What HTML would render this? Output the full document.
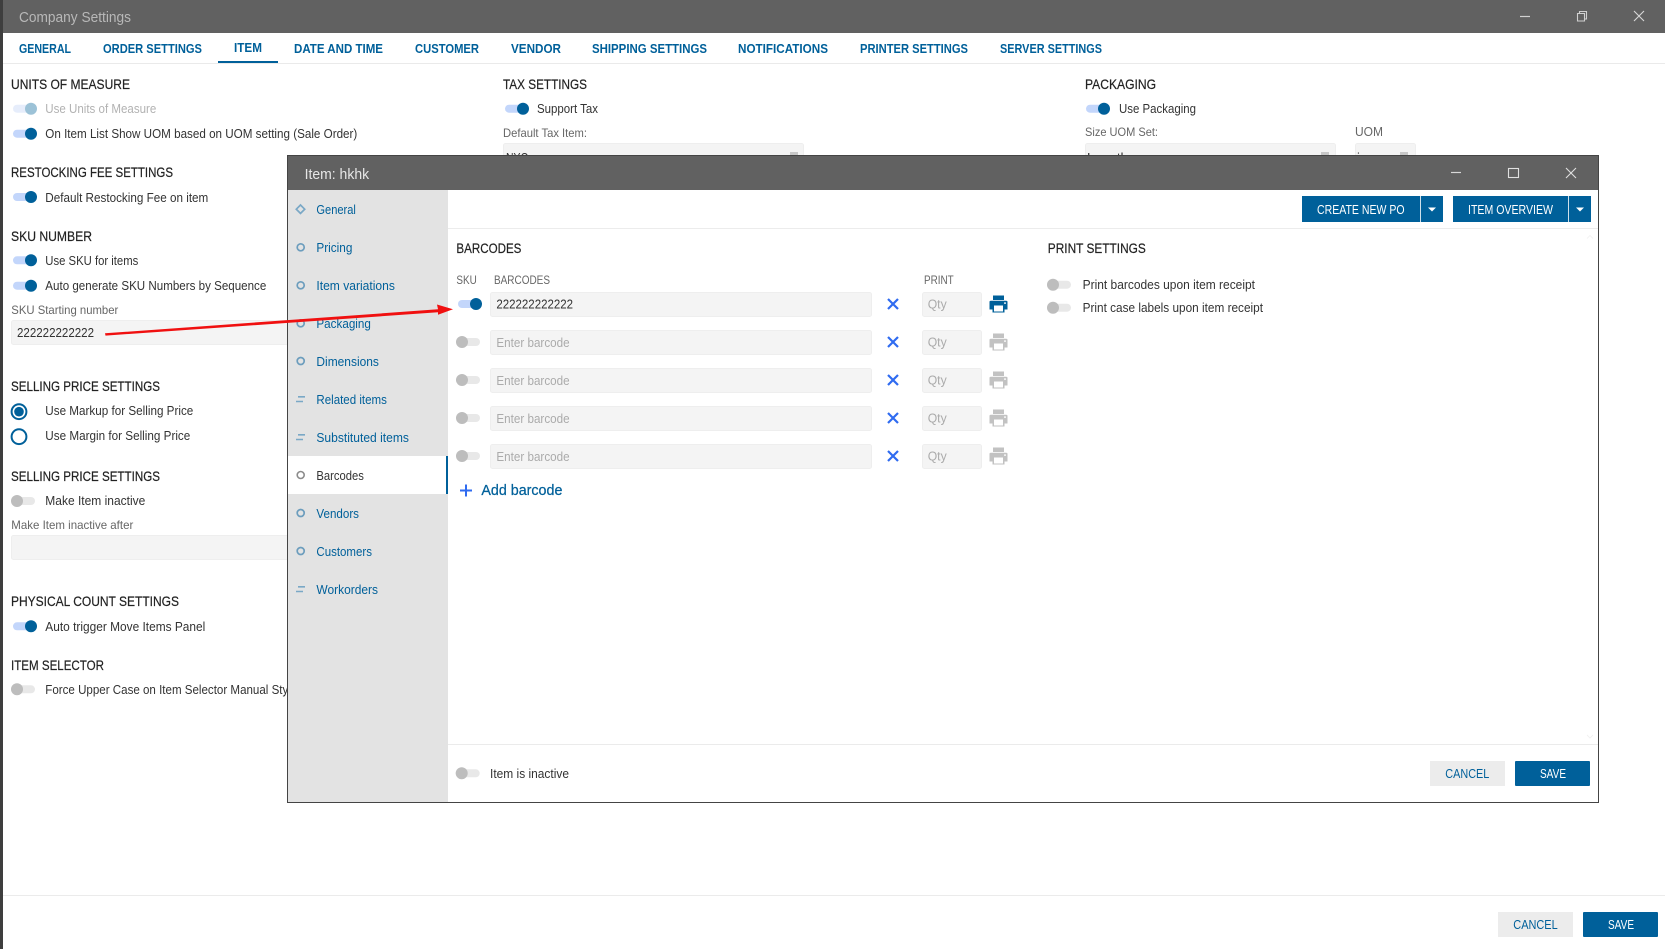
<!DOCTYPE html>
<html lang="en">
<head>
<meta charset="utf-8">
<title>Company Settings</title>
<style>
html,body{margin:0;padding:0;background:#fff;width:1665px;height:949px;overflow:hidden}
svg{display:block}
text{font-family:"Liberation Sans",Arial,sans-serif;font-size:13px;fill:#333;white-space:pre}
.tab{font-weight:bold;fill:#00609a}
.h{font-size:14px;fill:#222;stroke:#222;stroke-width:.2px}
.l{font-size:12px;fill:#666}
.nav{fill:#00609a}
.ph{fill:#ababab}
.w{fill:#fff}
.b{fill:#00609a}
.inp{fill:#f4f4f4;stroke:#eeeeee;stroke-width:1}
</style>
</head>
<body>
<svg width="1665" height="949" viewBox="0 0 1665 949" xmlns="http://www.w3.org/2000/svg">
<defs>
<g id="on"><rect x="-18" y="-4" width="22" height="8" rx="4" fill="#c3d6fb"/><circle r="6" fill="#00609a"/></g>
<g id="dis"><rect x="-18" y="-4" width="22" height="8" rx="4" fill="#e6edfb"/><circle r="6" fill="#9cc2d7"/></g>
<g id="off"><rect x="-6" y="-4" width="24" height="8" rx="4" fill="#e8e8e8"/><circle r="6" fill="#bdbdbd"/></g>
<g id="printer">
  <rect x="-5.500" y="-8.500" width="11" height="4.500" fill="currentColor"/>
  <path d="M-9 -2 Q-9 -3.200 -7.600 -3.200 H7.600 Q9 -3.200 9 -2 V5.500 H6 V8.500 H-6 V5.500 H-9 Z" fill="currentColor"/>
  <rect x="-4.500" y="1.500" width="9" height="6" fill="#fff"/>
  <rect x="5.600" y="-1.600" width="1.800" height="1.400" fill="#fff"/>
</g>
<g id="x"><path d="M-5 -5 L5 5 M5 -5 L-5 5" stroke="#2f6bf0" stroke-width="2.200" fill="none"/></g>
<g id="ring"><circle r="3.500" fill="none" stroke="#6c9dbd" stroke-width="1.700"/></g>
<g id="lines"><path d="M-2.700 -2.200 H4.300 M-4.700 2.500 H2.300" stroke="#7aa8c6" stroke-width="1.600" fill="none"/></g>
</defs>

<!-- Background window -->
<rect width="1665" height="949" fill="#fff"/>
<rect x="0" y="0" width="3" height="949" fill="#3e3e3e"/>
<rect x="3" y="0" width="1662" height="33" fill="#616161"/>
<text x="19" y="22" style="font-size:15px;fill:#b8b8b8" textLength="112" lengthAdjust="spacingAndGlyphs">Company Settings</text>
<path d="M1520 16.500H1530" stroke="#d0d0d0" stroke-width="1.200"/>
<path d="M1577.500 13.500h7v7.500h-7z M1579.500 13.500v-2h7v7.500h-2" fill="none" stroke="#d0d0d0" stroke-width="1.100"/>
<path d="M1634 11L1644 21M1644 11L1634 21" stroke="#d8d8d8" stroke-width="1.100"/>

<rect x="3" y="63" width="1662" height="1" fill="#eaeaea"/>
<text class="tab" x="19" y="53" textLength="52" lengthAdjust="spacingAndGlyphs">GENERAL</text>
<text class="tab" x="103" y="53" textLength="99" lengthAdjust="spacingAndGlyphs">ORDER SETTINGS</text>
<text class="tab" x="234" y="52" textLength="28" lengthAdjust="spacingAndGlyphs">ITEM</text>
<rect x="218" y="61" width="60" height="2" fill="#00609a"/>
<text class="tab" x="294" y="53" textLength="89" lengthAdjust="spacingAndGlyphs">DATE AND TIME</text>
<text class="tab" x="415" y="53" textLength="64" lengthAdjust="spacingAndGlyphs">CUSTOMER</text>
<text class="tab" x="511" y="53" textLength="50" lengthAdjust="spacingAndGlyphs">VENDOR</text>
<text class="tab" x="592" y="53" textLength="115" lengthAdjust="spacingAndGlyphs">SHIPPING SETTINGS</text>
<text class="tab" x="738" y="53" textLength="90" lengthAdjust="spacingAndGlyphs">NOTIFICATIONS</text>
<text class="tab" x="860" y="53" textLength="108" lengthAdjust="spacingAndGlyphs">PRINTER SETTINGS</text>
<text class="tab" x="1000" y="53" textLength="102" lengthAdjust="spacingAndGlyphs">SERVER SETTINGS</text>

<!-- Left column -->
<text class="h" x="11" y="89" textLength="119" lengthAdjust="spacingAndGlyphs">UNITS OF MEASURE</text>
<use href="#dis" x="31" y="108.700"/>
<text x="45.300" y="113" style="fill:#b2b2b2" textLength="111" lengthAdjust="spacingAndGlyphs">Use Units of Measure</text>
<use href="#on" x="31" y="133.700"/>
<text x="45.300" y="138" textLength="312" lengthAdjust="spacingAndGlyphs">On Item List Show UOM based on UOM setting (Sale Order)</text>

<text class="h" x="11" y="177" textLength="162" lengthAdjust="spacingAndGlyphs">RESTOCKING FEE SETTINGS</text>
<use href="#on" x="31" y="197"/>
<text x="45.300" y="202" textLength="163" lengthAdjust="spacingAndGlyphs">Default Restocking Fee on item</text>

<text class="h" x="11" y="241" textLength="81" lengthAdjust="spacingAndGlyphs">SKU NUMBER</text>
<use href="#on" x="31" y="260.300"/>
<text x="45.300" y="265" textLength="93" lengthAdjust="spacingAndGlyphs">Use SKU for items</text>
<use href="#on" x="31" y="285.700"/>
<text x="45.300" y="290" textLength="221" lengthAdjust="spacingAndGlyphs">Auto generate SKU Numbers by Sequence</text>

<text class="l" x="11.300" y="314" textLength="107" lengthAdjust="spacingAndGlyphs">SKU Starting number</text>
<rect class="inp" x="11.500" y="320.500" width="290" height="24" rx="2"/>
<text x="17" y="337" textLength="77" lengthAdjust="spacingAndGlyphs">222222222222</text>

<text class="h" x="11" y="391" textLength="149" lengthAdjust="spacingAndGlyphs">SELLING PRICE SETTINGS</text>
<circle cx="19" cy="411.700" r="7.400" fill="#fff" stroke="#00609a" stroke-width="2"/>
<circle cx="19" cy="411.700" r="4.800" fill="#00609a"/>
<text x="45.300" y="415" textLength="148" lengthAdjust="spacingAndGlyphs">Use Markup for Selling Price</text>
<circle cx="19" cy="436.700" r="7.400" fill="#fff" stroke="#00609a" stroke-width="2"/>
<text x="45.300" y="440" textLength="145" lengthAdjust="spacingAndGlyphs">Use Margin for Selling Price</text>

<text class="h" x="11" y="481" textLength="149" lengthAdjust="spacingAndGlyphs">SELLING PRICE SETTINGS</text>
<use href="#off" x="17" y="501"/>
<text x="45.300" y="505" textLength="100" lengthAdjust="spacingAndGlyphs">Make Item inactive</text>
<text class="l" x="11.300" y="529" textLength="122" lengthAdjust="spacingAndGlyphs">Make Item inactive after</text>
<rect class="inp" x="11.500" y="535.500" width="290" height="24" rx="2"/>

<text class="h" x="11" y="606" textLength="168" lengthAdjust="spacingAndGlyphs">PHYSICAL COUNT SETTINGS</text>
<use href="#on" x="31" y="626.300"/>
<text x="45.300" y="631" textLength="160" lengthAdjust="spacingAndGlyphs">Auto trigger Move Items Panel</text>

<text class="h" x="11" y="670" textLength="93" lengthAdjust="spacingAndGlyphs">ITEM SELECTOR</text>
<use href="#off" x="17" y="689.300"/>
<text x="45.300" y="694" textLength="252" lengthAdjust="spacingAndGlyphs">Force Upper Case on Item Selector Manual Style</text>

<!-- Tax column -->
<text class="h" x="503" y="89" textLength="84" lengthAdjust="spacingAndGlyphs">TAX SETTINGS</text>
<use href="#on" x="523" y="108.700"/>
<text x="537" y="113" textLength="61" lengthAdjust="spacingAndGlyphs">Support Tax</text>
<text class="l" x="503" y="137" textLength="84" lengthAdjust="spacingAndGlyphs">Default Tax Item:</text>
<rect class="inp" x="503.500" y="143.500" width="300" height="24" rx="2"/>
<text x="506" y="162" textLength="22" lengthAdjust="spacingAndGlyphs">NYC</text>
<rect x="790" y="152" width="8" height="3" fill="#c8c8c8"/>

<!-- Packaging column -->
<text class="h" x="1085" y="89" textLength="71" lengthAdjust="spacingAndGlyphs">PACKAGING</text>
<use href="#on" x="1104" y="108.700"/>
<text x="1119" y="113" textLength="77" lengthAdjust="spacingAndGlyphs">Use Packaging</text>
<text class="l" x="1085" y="136" textLength="73" lengthAdjust="spacingAndGlyphs">Size UOM Set:</text>
<text class="l" x="1355" y="136" style="font-size:13px" textLength="28" lengthAdjust="spacingAndGlyphs">UOM</text>
<rect class="inp" x="1085.500" y="143.500" width="250" height="24" rx="2"/>
<rect class="inp" x="1355.500" y="143.500" width="60" height="24" rx="2"/>
<text x="1087" y="162" textLength="41" lengthAdjust="spacingAndGlyphs">Length</text>
<text x="1357" y="162">i</text>
<rect x="1321" y="152" width="8" height="3" fill="#c8c8c8"/>
<rect x="1400" y="152" width="8" height="3" fill="#c8c8c8"/>

<!-- Footer of main window -->
<rect x="3" y="895" width="1662" height="1" fill="#ebebeb"/>
<rect x="1498" y="912" width="75" height="25" fill="#ececec"/>
<text class="b" x="1513.300" y="929" textLength="44.400" lengthAdjust="spacingAndGlyphs">CANCEL</text>
<rect x="1583" y="912" width="75" height="25" rx="1" fill="#00609a"/>
<text class="w" x="1608" y="929" textLength="26" lengthAdjust="spacingAndGlyphs">SAVE</text>

<!-- Dialog -->
<rect x="288" y="156" width="1310.500" height="646.500" fill="#fff"/>
<rect x="288" y="156" width="1310" height="34" fill="#616161"/>
<text x="304.600" y="179" style="font-size:15px;fill:#e6e6e6" textLength="64.500" lengthAdjust="spacingAndGlyphs">Item: hkhk</text>
<path d="M1451 172.500H1461" stroke="#d8d8d8" stroke-width="1.200"/>
<rect x="1508.500" y="168.500" width="10" height="9" fill="none" stroke="#e0e0e0" stroke-width="1.100"/>
<path d="M1566 168L1576 178M1576 168L1566 178" stroke="#e0e0e0" stroke-width="1.100"/>

<!-- Sidebar -->
<rect x="288" y="190" width="160" height="612" fill="#e3e3e3"/>
<rect x="288" y="456" width="160" height="38" fill="#fff"/>
<rect x="446" y="456" width="2" height="38" fill="#00609a"/>

<path d="M300.500 205L304.700 209.200L300.500 213.400L296.300 209.200Z" fill="none" stroke="#7aa8c6" stroke-width="1.700"/>
<use href="#ring" x="300.700" y="247.300"/>
<use href="#ring" x="300.700" y="285.300"/>
<use href="#ring" x="300.700" y="323.300"/>
<use href="#ring" x="300.700" y="361"/>
<use href="#lines" x="300.700" y="399"/>
<use href="#lines" x="300.700" y="437"/>
<circle cx="300.700" cy="475" r="3.500" fill="none" stroke="#8c8c8c" stroke-width="1.600"/>
<use href="#ring" x="300.700" y="513"/>
<use href="#ring" x="300.700" y="551"/>
<use href="#lines" x="300.700" y="589"/>

<text class="nav" x="316.400" y="214" textLength="39.500" lengthAdjust="spacingAndGlyphs">General</text>
<text class="nav" x="316.400" y="252" textLength="36" lengthAdjust="spacingAndGlyphs">Pricing</text>
<text class="nav" x="316.400" y="290" textLength="78.500" lengthAdjust="spacingAndGlyphs">Item variations</text>
<text class="nav" x="316.400" y="328" textLength="54.500" lengthAdjust="spacingAndGlyphs">Packaging</text>
<text class="nav" x="316.400" y="366" textLength="62.500" lengthAdjust="spacingAndGlyphs">Dimensions</text>
<text class="nav" x="316.400" y="404" textLength="70.500" lengthAdjust="spacingAndGlyphs">Related items</text>
<text class="nav" x="316.400" y="442" textLength="92.500" lengthAdjust="spacingAndGlyphs">Substituted items</text>
<text x="316.400" y="480" textLength="47.500" lengthAdjust="spacingAndGlyphs">Barcodes</text>
<text class="nav" x="316.400" y="518" textLength="42.600" lengthAdjust="spacingAndGlyphs">Vendors</text>
<text class="nav" x="316.400" y="556" textLength="55.600" lengthAdjust="spacingAndGlyphs">Customers</text>
<text class="nav" x="316.400" y="594" textLength="61.600" lengthAdjust="spacingAndGlyphs">Workorders</text>

<!-- Dialog toolbar -->
<rect x="448" y="228" width="1150" height="1" fill="#ececec"/>
<rect x="1302" y="196" width="141" height="26" fill="#00609a"/>
<rect x="1420" y="196" width="1" height="26" fill="#cfe0ea"/>
<text class="w" x="1317" y="214" textLength="87.600" lengthAdjust="spacingAndGlyphs">CREATE NEW PO</text>
<path d="M1428 207.500H1436L1432 211.500Z" fill="#fff"/>
<rect x="1453" y="196" width="138" height="26" fill="#00609a"/>
<rect x="1568" y="196" width="1" height="26" fill="#cfe0ea"/>
<text class="w" x="1468" y="214" textLength="85" lengthAdjust="spacingAndGlyphs">ITEM OVERVIEW</text>
<path d="M1576 207.500H1584L1580 211.500Z" fill="#fff"/>

<!-- Barcodes -->
<text class="h" x="456.400" y="253" textLength="65" lengthAdjust="spacingAndGlyphs">BARCODES</text>
<text class="l" x="456.400" y="284" textLength="20.400" lengthAdjust="spacingAndGlyphs">SKU</text>
<text class="l" x="494" y="284" textLength="56" lengthAdjust="spacingAndGlyphs">BARCODES</text>
<text class="l" x="924" y="284" textLength="29.700" lengthAdjust="spacingAndGlyphs">PRINT</text>

<use href="#on" x="476" y="304"/>
<rect class="inp" x="490.500" y="292.500" width="381" height="24" rx="2"/>
<text x="496.400" y="308.500" textLength="76.600" lengthAdjust="spacingAndGlyphs">222222222222</text>
<use href="#x" x="893" y="304"/>
<rect class="inp" x="922.500" y="292.500" width="59" height="24" rx="2"/>
<text class="ph" x="927.700" y="308.500" textLength="19" lengthAdjust="spacingAndGlyphs">Qty</text>
<use href="#printer" x="998.500" y="304" style="color:#00609a"/>

<use href="#off" x="462" y="342"/>
<rect class="inp" x="490.500" y="330.500" width="381" height="24" rx="2"/>
<text class="ph" x="496.400" y="347" textLength="73.200" lengthAdjust="spacingAndGlyphs">Enter barcode</text>
<use href="#x" x="893" y="342"/>
<rect class="inp" x="922.500" y="330.500" width="59" height="24" rx="2"/>
<text class="ph" x="927.700" y="346.500" textLength="19" lengthAdjust="spacingAndGlyphs">Qty</text>
<use href="#printer" x="998.500" y="342" style="color:#c2c2c2"/>

<use href="#off" x="462" y="380"/>
<rect class="inp" x="490.500" y="368.500" width="381" height="24" rx="2"/>
<text class="ph" x="496.400" y="385" textLength="73.200" lengthAdjust="spacingAndGlyphs">Enter barcode</text>
<use href="#x" x="893" y="380"/>
<rect class="inp" x="922.500" y="368.500" width="59" height="24" rx="2"/>
<text class="ph" x="927.700" y="384.500" textLength="19" lengthAdjust="spacingAndGlyphs">Qty</text>
<use href="#printer" x="998.500" y="380" style="color:#c2c2c2"/>

<use href="#off" x="462" y="418"/>
<rect class="inp" x="490.500" y="406.500" width="381" height="24" rx="2"/>
<text class="ph" x="496.400" y="423" textLength="73.200" lengthAdjust="spacingAndGlyphs">Enter barcode</text>
<use href="#x" x="893" y="418"/>
<rect class="inp" x="922.500" y="406.500" width="59" height="24" rx="2"/>
<text class="ph" x="927.700" y="422.500" textLength="19" lengthAdjust="spacingAndGlyphs">Qty</text>
<use href="#printer" x="998.500" y="418" style="color:#c2c2c2"/>

<use href="#off" x="462" y="456"/>
<rect class="inp" x="490.500" y="444.500" width="381" height="24" rx="2"/>
<text class="ph" x="496.400" y="461" textLength="73.200" lengthAdjust="spacingAndGlyphs">Enter barcode</text>
<use href="#x" x="893" y="456"/>
<rect class="inp" x="922.500" y="444.500" width="59" height="24" rx="2"/>
<text class="ph" x="927.700" y="460.500" textLength="19" lengthAdjust="spacingAndGlyphs">Qty</text>
<use href="#printer" x="998.500" y="456" style="color:#c2c2c2"/>

<path d="M460 490.500H472M466 484.500V496.500" stroke="#2f6bf0" stroke-width="2" fill="none"/>
<text x="481.400" y="495" style="font-size:14.500px;fill:#00609a;stroke:#00609a;stroke-width:.25px" textLength="81" lengthAdjust="spacingAndGlyphs">Add barcode</text>

<!-- Print settings -->
<text class="h" x="1047.800" y="253" textLength="98" lengthAdjust="spacingAndGlyphs">PRINT SETTINGS</text>
<use href="#off" x="1053" y="284.700"/>
<text x="1082.600" y="289" textLength="172.400" lengthAdjust="spacingAndGlyphs">Print barcodes upon item receipt</text>
<use href="#off" x="1053" y="307.700"/>
<text x="1082.600" y="312" textLength="180.400" lengthAdjust="spacingAndGlyphs">Print case labels upon item receipt</text>

<!-- Faint scroll chevrons -->
<path d="M1587 238.500L1590 235.500L1593 238.500" fill="none" stroke="#f4f4f4" stroke-width="1"/>
<path d="M1587 735L1590 738L1593 735" fill="none" stroke="#f2f2f2" stroke-width="1"/>

<!-- Dialog footer -->
<rect x="448" y="744" width="1150" height="1" fill="#ebebeb"/>
<use href="#off" x="461.700" y="773.300"/>
<text x="490" y="778" textLength="79" lengthAdjust="spacingAndGlyphs">Item is inactive</text>
<rect x="1430" y="761" width="75" height="25" fill="#ececec"/>
<text class="b" x="1445.300" y="778" textLength="44" lengthAdjust="spacingAndGlyphs">CANCEL</text>
<rect x="1515" y="761" width="75" height="25" rx="1" fill="#00609a"/>
<text class="w" x="1540" y="778" textLength="26" lengthAdjust="spacingAndGlyphs">SAVE</text>

<!-- Dialog border -->
<rect x="287.500" y="155.500" width="1311" height="647" fill="none" stroke="#444" stroke-width="1"/>

<!-- Red arrow -->
<path d="M105 333.300L438 309.300L437 304.500L453 309.300L438 314.800L438 312.300L105.500 335.600Z" fill="#f01010"/>
</svg>
</body>
</html>
